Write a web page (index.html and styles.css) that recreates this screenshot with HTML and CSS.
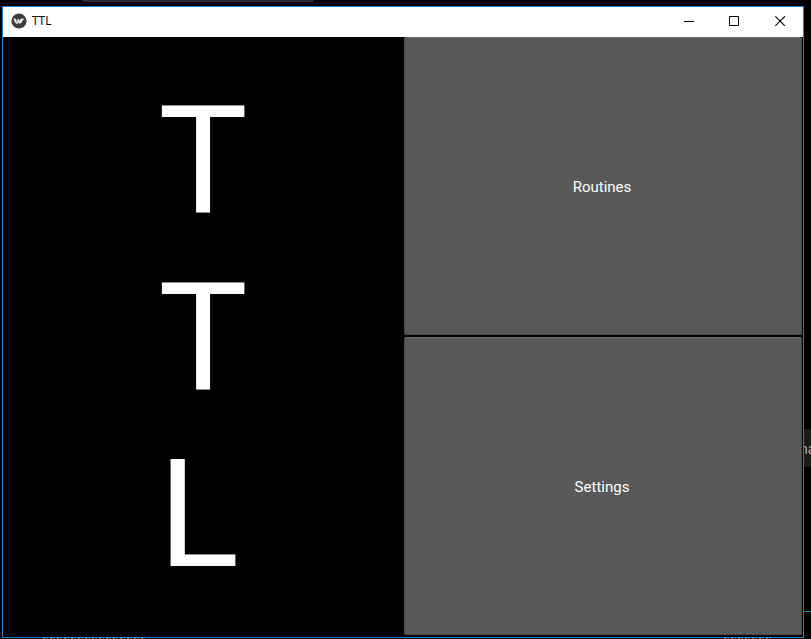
FILE: index.html
```
<!DOCTYPE html>
<html lang="en">
<head>
<meta charset="utf-8">
<title>TTL</title>
<link rel="stylesheet" href="styles.css">
</head>
<body>
<div class="desktop">
  <div class="back-tab"></div>
  <div class="back-item">na</div>
  <div class="back-rule"></div>
  <div class="back-text back-text-left"></div>
  <div class="back-text back-text-right"></div>
  <div class="window">
    <header class="titlebar">
      <svg class="app-icon" viewBox="0 0 16 16" aria-hidden="true">
        <circle cx="8" cy="8" r="7.6" fill="#3c3f40"/>
        <path d="M2.4 5.2 4.8 6.1 6 8.2 7.1 5.6 8.8 7.4 10.3 5.6 13.8 5.9 11.6 7.3 10.4 9.7 8.6 10.7 7.6 9.6 6 11.3 4 9.4Z" fill="#f4f4f4"/>
        <path d="M5.1 7.3 6.2 9.8M8 7.6 7.8 9.2" stroke="#6a6c6d" stroke-width=".6"/>
      </svg>
      <h1 class="title">TTL</h1>
      <div class="controls">
        <button class="control" type="button" aria-label="Minimize"><svg viewBox="0 0 11 11"><path d="M1 5.5H11"/></svg></button>
        <button class="control" type="button" aria-label="Maximize"><svg viewBox="0 0 11 11"><path d="M.5.5H9.5V9.5H.5Z"/></svg></button>
        <button class="control" type="button" aria-label="Close"><svg viewBox="0 0 11 11"><path class="cross" d="M.3.3 9.9 9.9M9.9.3.3 9.9"/></svg></button>
      </div>
    </header>
    <main class="content">
      <div class="banner"><div class="letters"><div>T</div><div>T</div><div>L</div></div></div>
      <nav class="menu">
        <button class="choice" type="button">Routines</button>
        <button class="choice" type="button">Settings</button>
      </nav>
    </main>
  </div>
</div>
</body>
</html>
```
FILE: styles.css
```
* { box-sizing: border-box; }
body { margin: 0; background: #000; font-family: Roboto, sans-serif; }
.desktop {
  position: relative;
  display: flex;
  height: 100vh;
  padding: 6px 7px 1px 2px;
  overflow: hidden;
}
.window {
  position: relative;
  flex: 1;
  display: flex;
  flex-direction: column;
  border: 1px solid #1883d7;
  background: #000;
}
.titlebar {
  display: flex;
  align-items: center;
  height: 30px;
  padding: 0 0 2px 8px;
  background: #fff;
}
.app-icon { width: 16px; height: 16px; }
.title {
  margin: 0 0 0 5px;
  font: 12px/16px "Open Sans", sans-serif;
  color: #000;
}
.controls { display: flex; margin-left: auto; }
.control {
  display: grid;
  place-items: center;
  width: 46px;
  height: 28px;
  padding: 0;
  border: 0;
  background: none;
}
.control svg {
  width: 11px;
  height: 11px;
  fill: none;
  stroke: #000;
  stroke-width: 1;
}
.cross { stroke-width: 1.1; }
.content {
  flex: 1;
  display: grid;
  grid-template-columns: 1fr 1fr;
  min-height: 0;
}
.banner {
  display: flex;
  align-items: center;
  justify-content: center;
  padding-top: 2px;
  font-size: 150px;
  line-height: 177px;
  color: #fff;
}
.menu {
  display: grid;
  grid-template-rows: 1fr 1fr;
  gap: 2px;
  padding: 0 1px 2px;
}
.choice {
  padding: 2px 2px 0 0;
  border: 1px solid #4a4a4a;
  border-top-color: #707070;
  border-radius: 2px;
  background: #585858;
  color: #fff;
  font: 15px/18px Roboto, sans-serif;
}
.back-tab {
  position: absolute;
  top: 0;
  left: 82px;
  width: 232px;
  height: 2px;
  border-radius: 0 0 2px 2px;
  background: #272c35;
}
.back-item {
  position: absolute;
  top: 429px;
  right: 0;
  width: 11px;
  height: 38px;
  background: #1a1a1a;
  color: #b0b0b0;
  font: 14px/40px Roboto, sans-serif;
}
.back-rule {
  position: absolute;
  top: 611px;
  right: 0;
  width: 7px;
  height: 1px;
  background: #1b8fb5;
}
.back-text {
  position: absolute;
  bottom: 0;
  height: 1px;
  background: repeating-linear-gradient(90deg, #777 0 2px, #222 2px 4px, #555 4px 5px, #000 5px 7px);
}
.back-text-left { left: 43px; width: 102px; }
.back-text-right { right: 39px; width: 48px; }
```
